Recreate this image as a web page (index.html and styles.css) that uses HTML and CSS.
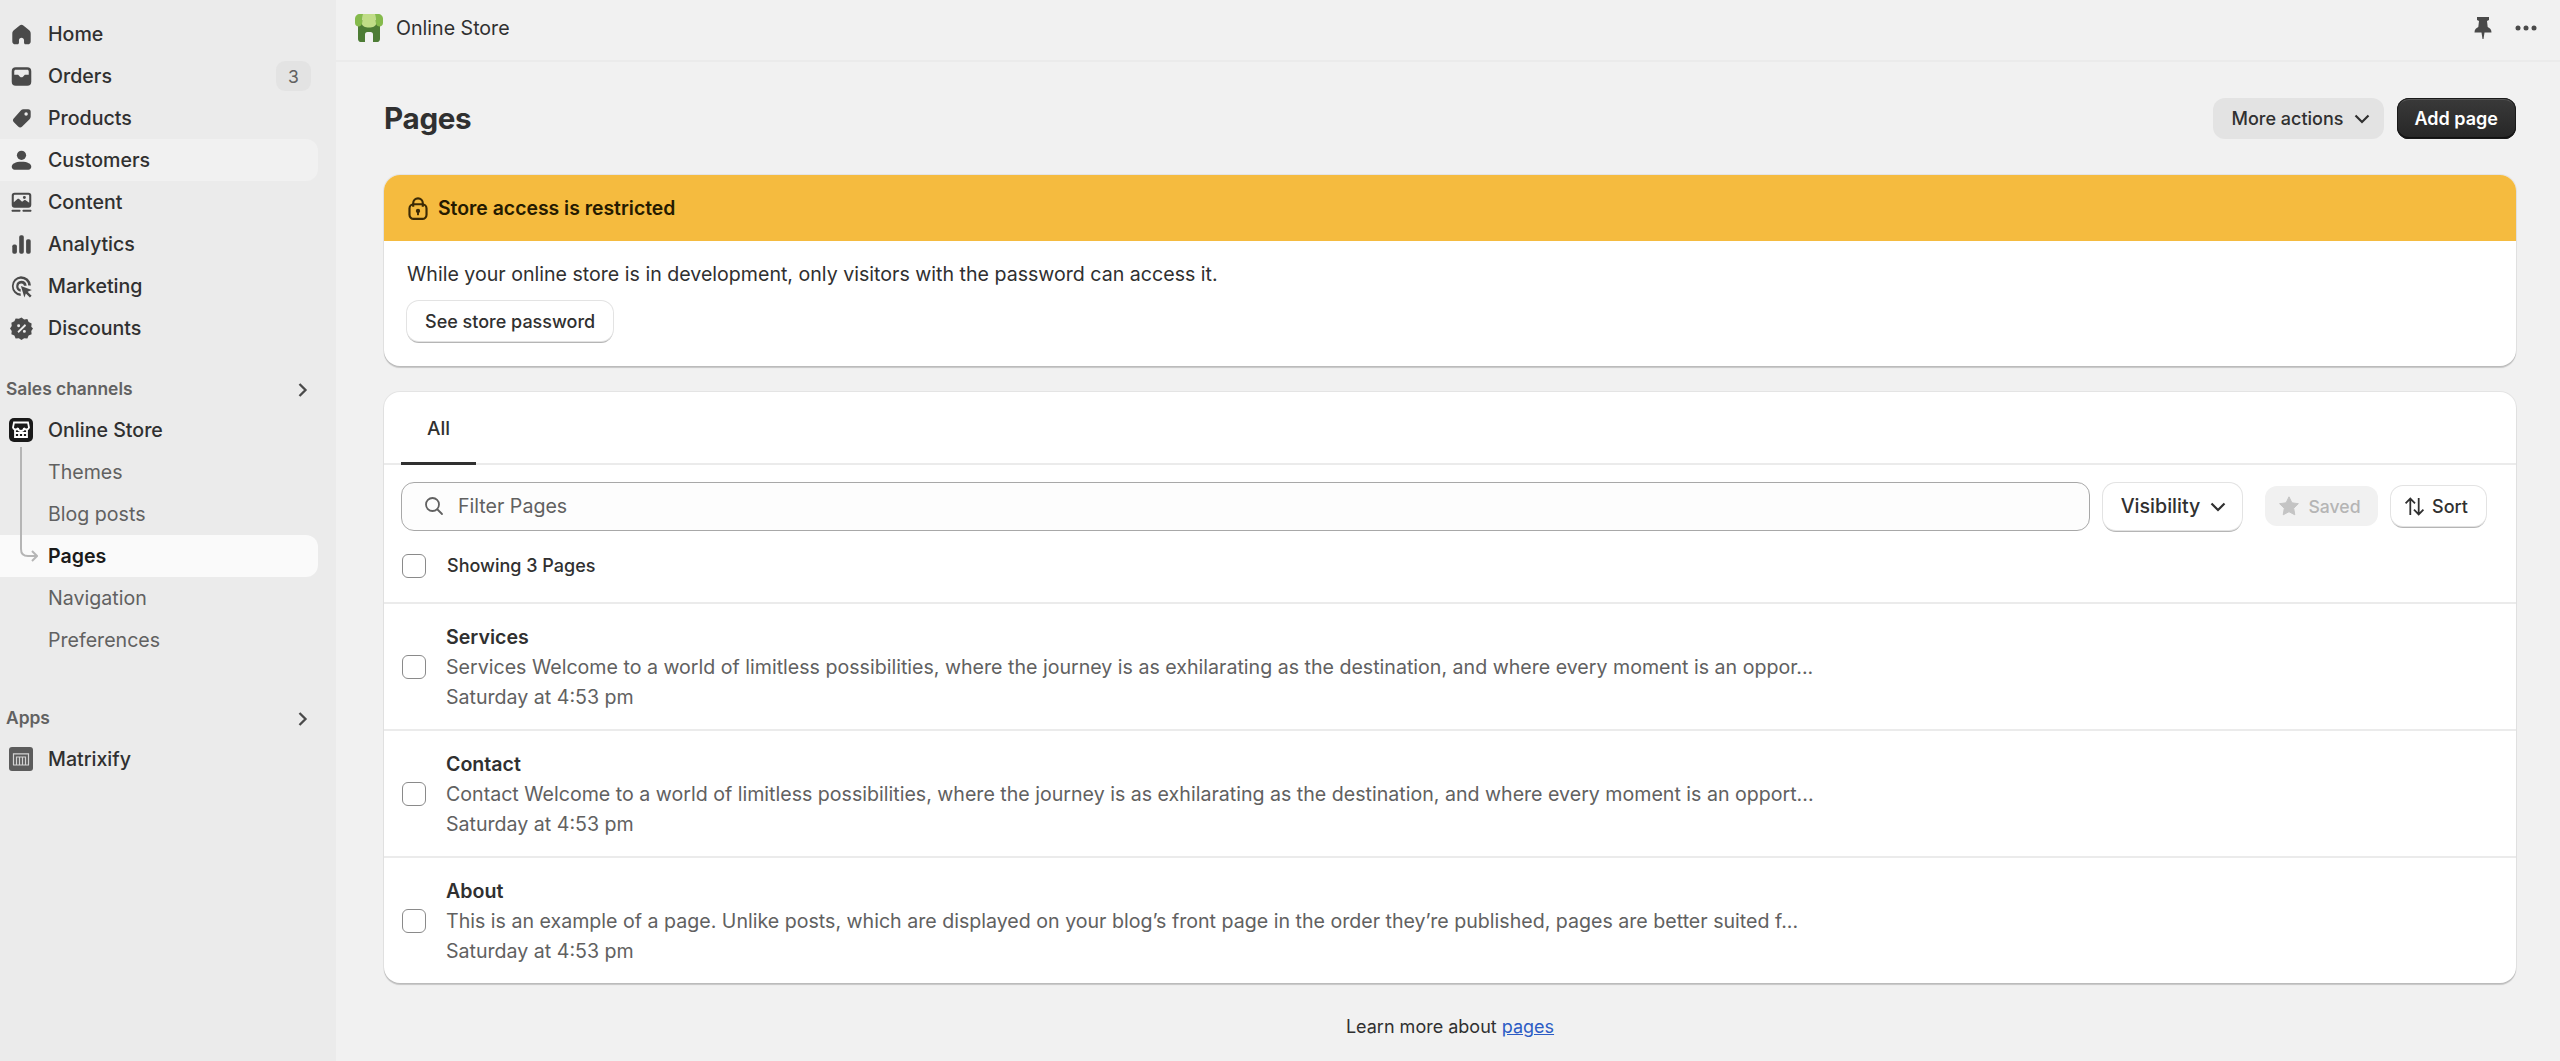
FILE: index.html
```html
<!DOCTYPE html>
<html lang="en">
<head>
<meta charset="utf-8">
<title>Pages</title>
<link rel="stylesheet" href="styles.css">
</head>
<body>
<div class="app">
  <nav class="sidebar">
    <ul class="nav">
      <li class="nav-item"><svg class="ico" viewBox="0 0 20 20"><path d="M10 1.500c-.6 0-1.100.2-1.600.6L3.300 6.400c-.9.7-1.300 1.700-1.300 2.900v6.700c0 1.400 1.100 2.500 2.500 2.500h2c.7 0 1.300-.6 1.300-1.300v-2.200c0-1.300 1-2.200 2.200-2.200s2.200.9 2.200 2.200v2.200c0 .7.6 1.300 1.300 1.300h2c1.400 0 2.500-1.100 2.500-2.500V9.300c0-1.200-.4-2.200-1.300-2.900l-5.100-4.300c-.5-.4-1-.6-1.600-.6z"/></svg><span>Home</span></li>
      <li class="nav-item"><svg class="ico" viewBox="0 0 20 20"><path fill-rule="evenodd" d="M5 2h10a3.500 3.500 0 0 1 3.500 3.500v9a3.500 3.500 0 0 1-3.500 3.500H5a3.500 3.500 0 0 1-3.500-3.500v-9A3.500 3.500 0 0 1 5 2zm-1.300 6.500h2.800c.7 0 1.100.4 1.400.9.400.8 1.100 1.300 2.100 1.300s1.700-.5 2.100-1.300c.3-.5.7-.9 1.400-.9h2.800v-3C16.300 4.800 15.700 4.200 15 4.200H5c-.7 0-1.300.6-1.300 1.300z"/></svg><span>Orders</span><b class="badge">3</b></li>
      <li class="nav-item"><svg class="ico" viewBox="0 0 20 20"><path fill-rule="evenodd" d="M11.700 2h4.100A2.200 2.200 0 0 1 18 4.200v4.100c0 .9-.4 1.700-1 2.300l-6.400 6.400a2.500 2.500 0 0 1-3.500 0l-3.700-3.700a2.500 2.500 0 0 1 0-3.500L9.400 3c.6-.6 1.400-1 2.300-1zM14 7.500a1.500 1.500 0 1 0 0-3 1.500 1.500 0 0 0 0 3z"/></svg><span>Products</span></li>
      <li class="nav-item is-hover"><svg class="ico" viewBox="0 0 20 20"><circle cx="10" cy="5.500" r="4"/><path d="M1.500 15.500c0-2.800 3.200-4.500 8.500-4.500s8.500 1.700 8.500 4.500c0 1.300-1 2.500-2.500 2.500H4c-1.500 0-2.500-1.200-2.500-2.500z"/></svg><span>Customers</span></li>
      <li class="nav-item"><svg class="ico" viewBox="0 0 20 20"><path fill-rule="evenodd" d="M4 1.500h12A2.500 2.500 0 0 1 18.500 4v8a2.500 2.500 0 0 1-2.500 2.500H4A2.500 2.500 0 0 1 1.500 12V4A2.500 2.500 0 0 1 4 1.500zm-.7 2.800v5.500l3.200-2.800c.4-.3 1-.3 1.400 0l2.600 2.300 1.800-1.300c.4-.3.900-.3 1.300 0l3.100 2.300V4.300c0-.6-.4-1-1-1H4.300c-.6 0-1 .4-1 1zM12.500 7a1.300 1.300 0 1 0 0-2.600 1.300 1.300 0 0 0 0 2.600z"/><rect x="1.500" y="16.300" width="7.500" height="1.700" rx=".5"/><rect x="11" y="16.300" width="7.500" height="1.700" rx=".5"/></svg><span>Content</span></li>
      <li class="nav-item"><svg class="ico" viewBox="0 0 20 20"><rect x="2" y="10" width="4" height="8" rx="1.500"/><rect x="8" y="2" width="4" height="16" rx="1.500"/><rect x="14" y="5.500" width="4" height="12.500" rx="1.500"/></svg><span>Analytics</span></li>
      <li class="nav-item"><svg class="ico" viewBox="0 0 20 20"><path d="M9.500 1a8.700 8.700 0 0 1 8.700 8.200h-2.300a6.400 6.400 0 1 0-6.600 6.800v2.300A8.700 8.700 0 0 1 9.500 1z"/><path d="M9.800 5a4.800 4.800 0 0 1 4.700 4.300h-2.300a2.500 2.500 0 1 0-2.900 3v2.200A4.800 4.800 0 0 1 9.800 5z"/><path d="M9.500 9.500l9.500 3.500-3.700 1.500 3.500 3.500-1.500 1.500-3.500-3.500-1.300 3.500z"/></svg><span>Marketing</span></li>
      <li class="nav-item"><svg class="ico" viewBox="0 0 20 20"><path fill-rule="evenodd" d="M10 .5l2.300 1.600 2.800-.3 1.100 2.600 2.600 1.200-.3 2.800L20 10l-1.500 2.200.3 2.800-2.600 1.100-1.100 2.600-2.800-.2L10 20l-2.300-1.500-2.800.2-1.100-2.600-2.600-1.100.3-2.800L0 10l1.500-2.200-.3-2.800 2.600-1.200 1.100-2.600 2.800.3zM13 6l-6.500 6.500 1 1.500L14 7.500zM7.500 9a1.300 1.300 0 1 0 0-2.600 1.300 1.300 0 0 0 0 2.600zm5 4.800a1.300 1.300 0 1 0 0-2.600 1.300 1.300 0 0 0 0 2.600z"/></svg><span>Discounts</span></li>
    </ul>

    <div class="nav-head nav-head-sales"><span>Sales channels</span><svg class="chev" viewBox="0 0 20 20"><path d="M6.500 4l6 6-6 6" /></svg></div>
    <ul class="nav">
      <li class="nav-item"><svg class="ico store" viewBox="0 0 24 24"><rect width="24" height="24" rx="5" fill="#1a1a1a"/><path d="M5 4.500h14l1 5a2.200 2.200 0 0 1-2 1.800 2.500 2.500 0 0 1-3-1.300 3 3 0 0 1-6 0 2.500 2.500 0 0 1-3 1.300 2.200 2.200 0 0 1-2-1.800z" fill="none" stroke="#fff" stroke-width="1.800"/><path d="M6 12v7h12v-7M10 19v-4h4v4M6 15h12" fill="none" stroke="#fff" stroke-width="1.800"/></svg><span>Online Store</span></li>
      <li class="nav-item nav-sub">Themes</li>
      <li class="nav-item nav-sub">Blog posts</li>
      <li class="nav-item nav-sub is-active"><svg class="tree" viewBox="0 0 18 116"><path d="M1 0V102c0 5 2 7 7 7h9M12 104l5 5-5 5" fill="none" stroke="#b5b5b5" stroke-width="2"/></svg>Pages</li>
      <li class="nav-item nav-sub">Navigation</li>
      <li class="nav-item nav-sub">Preferences</li>
    </ul>

    <div class="nav-head nav-head-apps"><span>Apps</span><svg class="chev" viewBox="0 0 20 20"><path d="M6.500 4l6 6-6 6"/></svg></div>
    <ul class="nav">
      <li class="nav-item"><svg class="ico store" viewBox="0 0 24 24"><rect width="24" height="24" rx="3" fill="#5c5c5c"/><path d="M4.500 18V6.800h15V18M7.500 18V10h3v8M10.500 10h3v8M13.500 10h3v8M4 18h16" fill="none" stroke="#d4d4d4" stroke-width="1.200"/></svg><span>Matrixify</span></li>
    </ul>
  </nav>

  <div class="main">
    <header class="topbar">
      <svg class="logo" viewBox="0 0 28 28"><path d="M3 6h22v19c0 1.500-1 3-2.500 3H18V20.500a2.500 2.500 0 0 0-2.500-2.500h-3a2.500 2.500 0 0 0-2.500 2.500V28H5.500C4 28 3 26.500 3 25z" fill="#4d7c35"/><path d="M0 5C0 2 2 0 5 0h3L7 9.500C6.500 13.500 0 13.500 0 9z" fill="#85ba4c"/><path d="M28 5c0-3-2-5-5-5h-3l1 9.500c.5 4 7 4 7-.5z" fill="#85ba4c"/><path d="M8 0h12l1 9.500c.2 2.500-3 4-7 4s-7.200-1.500-7-4z" fill="#c0dd87"/></svg>
      <span class="topbar-title">Online Store</span>
      <svg class="top-ico" viewBox="0 0 20 22"><path d="M4 0h12v3l-2 1 .7 6c2.300 1 3.800 2.700 3.800 5.500H11.500L10.500 22h-1l-1-6.500H1.500C1.500 12.700 3 11 5.300 10L6 4 4 3z" fill="#4a4a4a"/></svg>
      <svg class="top-dots" viewBox="0 0 22 6"><circle cx="3" cy="3" r="2.500"/><circle cx="11" cy="3" r="2.500"/><circle cx="19" cy="3" r="2.500"/></svg>
    </header>

    <div class="content">
      <div class="page-head">
        <h1>Pages</h1>
        <button class="btn btn-ghost">More actions<svg class="chev-down" viewBox="0 0 16 16"><path d="M1.500 4.500L8 11l6.500-6.500"/></svg></button>
        <button class="btn btn-dark">Add page</button>
      </div>

      <section class="card card-notice">
        <div class="notice-head">
          <svg class="lock" viewBox="0 0 20 20"><path d="M6 9V6a4 4 0 0 1 8 0v3" fill="none" stroke="#3b2a05" stroke-width="1.800"/><rect x="2.900" y="6.900" width="14.200" height="12.200" rx="3.500" fill="none" stroke="#3b2a05" stroke-width="1.800"/><circle cx="10" cy="12.500" r="1.800" fill="#3b2a05"/><rect x="9.200" y="12.500" width="1.600" height="3.500" fill="#3b2a05"/></svg>
          <span>Store access is restricted</span>
        </div>
        <div class="notice-body">
          <p>While your online store is in development, only visitors with the password can access it.</p>
          <button class="btn btn-white">See store password</button>
        </div>
      </section>

      <section class="card card-list">
        <div class="tabs"><div class="tab">All</div></div>
        <div class="filters">
          <div class="search">
            <svg class="search-ico" viewBox="0 0 20 20"><circle cx="8.500" cy="8.500" r="6.500" fill="none" stroke="#616161" stroke-width="1.800"/><path d="M13.500 13.500L18 18" stroke="#616161" stroke-width="1.800" stroke-linecap="round"/></svg>
            <span>Filter Pages</span>
          </div>
          <button class="btn btn-white btn-vis">Visibility<svg class="chev-down" viewBox="0 0 16 16"><path d="M1.500 4.500L8 11l6.500-6.500"/></svg></button>
          <button class="btn btn-saved"><svg class="star" viewBox="0 0 20 20"><path d="M10 .8l2.900 6 6.500.9-4.700 4.600 1.100 6.500L10 15.700l-5.800 3.100 1.100-6.500L.6 7.700l6.500-.9z" fill="#c4c4c4" stroke="#c4c4c4" stroke-linejoin="round"/></svg>Saved</button>
          <button class="btn btn-white btn-sort"><svg class="sort" viewBox="0 0 20 20"><path d="M6 18V2.500M1.500 7L6 2.500 10.500 7M14 2v15.500M9.500 13l4.500 4.500 4.500-4.500" fill="none" stroke="#303030" stroke-width="1.700"/></svg>Sort</button>
        </div>
        <div class="showing"><i class="check"></i><span>Showing 3 Pages</span></div>
        <div class="row"><i class="check"></i><div class="row-text"><strong>Services</strong><p>Services Welcome to a world of limitless possibilities, where the journey is as exhilarating as the destination, and where every moment is an oppor...</p><p>Saturday at 4:53 pm</p></div></div>
        <div class="row"><i class="check"></i><div class="row-text"><strong>Contact</strong><p>Contact Welcome to a world of limitless possibilities, where the journey is as exhilarating as the destination, and where every moment is an opport...</p><p>Saturday at 4:53 pm</p></div></div>
        <div class="row"><i class="check"></i><div class="row-text"><strong>About</strong><p>This is an example of a page. Unlike posts, which are displayed on your blog’s front page in the order they’re published, pages are better suited f...</p><p>Saturday at 4:53 pm</p></div></div>
      </section>

      <p class="learn">Learn more about <a href="#">pages</a></p>
    </div>
  </div>
</div>
</body>
</html>
```
FILE: styles.css
```css
* { box-sizing: border-box; }
html, body { margin: 0; height: 100%; }
body {
  font-family: Inter, "Liberation Sans", sans-serif;
  font-size: 19.6px;
  color: #303030;
  background: #f1f1f1;
  overflow: hidden;
}
ul { list-style: none; margin: 0; padding: 0; }
p { margin: 0; }
.app { display: flex; height: 1061px; }

.sidebar {
  width: 336px;
  flex: none;
  background: #ebebeb;
  padding: 13px 18px 0 0;
}
.nav-item {
  position: relative;
  display: flex;
  align-items: center;
  height: 42px;
  padding: 0 0 0 48px;
  font-size: 19.6px;
  font-weight: 500;
  color: #303030;
  border-radius: 0 12px 12px 0;
}
.ico {
  position: absolute;
  left: 9.500px;
  top: 9.500px;
  width: 23px;
  height: 23px;
  fill: #4a4a4a;
}
.ico.store { left: 9px; top: 9px; width: 24px; height: 24px; }
.is-hover { background: #f1f1f1; }
.nav-sub { font-weight: 400; color: #616161; }
.nav-sub.is-active { background: #fafafa; font-weight: 600; color: #1a1a1a; }
.tree { position: absolute; left: 20px; top: -88px; width: 18px; height: 116px; }
.badge {
  margin-left: auto;
  margin-right: 7px;
  width: 35px;
  height: 30px;
  display: flex;
  align-items: center;
  justify-content: center;
  border-radius: 9px;
  background: #e3e3e3;
  font-size: 17.500px;
  font-weight: 400;
  color: #616161;
}
.nav-head {
  display: flex;
  align-items: center;
  justify-content: space-between;
  height: 42px;
  padding: 0 5px 0 6px;
  font-size: 17.400px;
  font-weight: 600;
  color: #616161;
}
.nav-head-sales { margin-top: 18px; }
.nav-head-apps { margin-top: 35px; }
.chev { width: 20px; height: 20px; margin-top: 4px; fill: none; stroke: #4a4a4a; stroke-width: 2.300; }

.main { flex: 1; min-width: 0; display: flex; flex-direction: column; }
.topbar {
  display: flex;
  align-items: center;
  height: 62px;
  flex: none;
  padding: 0 23px 5px 19px;
  border-bottom: 2px solid #ebebeb;
}
.logo { width: 28px; height: 28px; flex: none; }
.topbar-title { margin-left: 13px; font-size: 19.6px; color: #303030; }
.top-ico { width: 20px; height: 22px; margin-left: auto; }
.top-dots { width: 22px; height: 6px; margin-left: 22px; fill: #4a4a4a; }

.content { padding: 36px 44px 0 48px; flex: 1; }
.page-head { display: flex; align-items: center; height: 40px; gap: 13px; }
.page-head h1 { margin: 0 auto 0 0; font-size: 29.600px; font-weight: 700; color: #303030; letter-spacing: -.3px; }

.btn {
  display: inline-flex;
  align-items: center;
  justify-content: center;
  border: 0;
  border-radius: 12px;
  font-family: inherit;
  font-size: 18px;
  font-weight: 600;
  height: 41px;
  padding: 0 18px;
  color: #303030;
  background: none;
}
.btn-ghost { background: #e3e3e3; padding: 0 14px 0 19px; font-weight: 500; }
.btn-dark {
  color: #fff;
  background: linear-gradient(#3a3a3a, #262626);
  box-shadow: inset 0 0 0 1px #1a1a1a, inset 0 2px 0 #555, inset 0 -2px 0 #111;
}
.btn-white {
  background: #fff;
  box-shadow: 0 0 0 1px #e3e3e3, 0 2px 0 0 #b5b5b5;
  font-weight: 500;
}
.chev-down { width: 16px; height: 16px; margin-left: 10px; margin-top: 2px; fill: none; stroke: #303030; stroke-width: 2.200; }

.card {
  background: #fff;
  border-radius: 16px;
  box-shadow: 0 2px 1px rgba(0,0,0,.18), 0 0 0 1px rgba(0,0,0,.05);
  overflow: hidden;
}
.card-notice { margin-top: 37px; }
.notice-head {
  display: flex;
  align-items: center;
  height: 66px;
  padding: 0 22px;
  background: #f5bb3f;
  font-size: 19.4px;
  font-weight: 600;
  color: #251a00;
}
.lock { width: 24px; height: 24px; margin-right: 8px; }
.notice-body { padding: 19px 23px 0; height: 125px; }
.notice-body p { font-size: 19.6px; line-height: 28px; color: #303030; }
.notice-body .btn { margin-top: 13px; height: 40px; }

.card-list { margin-top: 26px; }
.tabs { height: 73px; padding: 0 17px; border-bottom: 2px solid #ebebeb; display: flex; align-items: stretch; }
.tab {
  width: 75px;
  margin-bottom: -2px;
  display: flex;
  align-items: center;
  justify-content: center;
  padding-top: 2px;
  font-size: 19px;
  font-weight: 500;
  border-bottom: 3px solid #303030;
}
.filters { display: flex; align-items: center; height: 76px; padding: 0 30px 0 17px; margin-top: 3px; }
.search {
  flex: 1;
  display: flex;
  align-items: center;
  height: 49px;
  padding: 0 22px;
  border: 1.500px solid #a8a8a8;
  border-radius: 13px;
  background: #fdfdfd;
  color: #616161;
  font-size: 19.6px;
}
.search-ico { width: 20px; height: 20px; margin-right: 14px; }
.btn-vis { width: 139px; height: 47px; margin-left: 13px; font-size: 19.6px; border-radius: 13px; padding: 0 14px 0 16px; }
.btn-saved { width: 113px; height: 40px; margin-left: 23px; background: #f1f1f1; color: #b5b5b5; padding: 0 3px 0 0; font-size: 17.6px; font-weight: 500; }
.star { width: 20px; height: 20px; margin-right: 9px; }
.btn-sort { width: 95px; height: 40px; margin-left: 13px; padding: 0 5px 0 0; border-radius: 12px; }
.sort { width: 21px; height: 21px; margin-right: 7px; }
.check {
  display: block;
  flex: none;
  width: 24px;
  height: 24px;
  background: #fff;
  border: 1.500px solid #8a8a8a;
  border-radius: 6px;
  margin-left: 18px;
}
.showing { display: flex; align-items: center; height: 58px; font-size: 18px; font-weight: 500; padding-bottom: 15px; }
.showing span { margin-left: 21px; }
.row {
  display: flex;
  align-items: center;
  height: 127px;
  border-top: 2px solid #ebebeb;
}
.row-text { margin-left: 20px; font-size: 19.6px; line-height: 30px; color: #616161; }
.row-text strong { display: block; font-weight: 600; color: #303030; }
.row-text p { white-space: nowrap; }
.learn { margin-top: 33px; text-align: center; font-size: 18px; color: #303030; }
.learn a { color: #2c5cc5; }
```
